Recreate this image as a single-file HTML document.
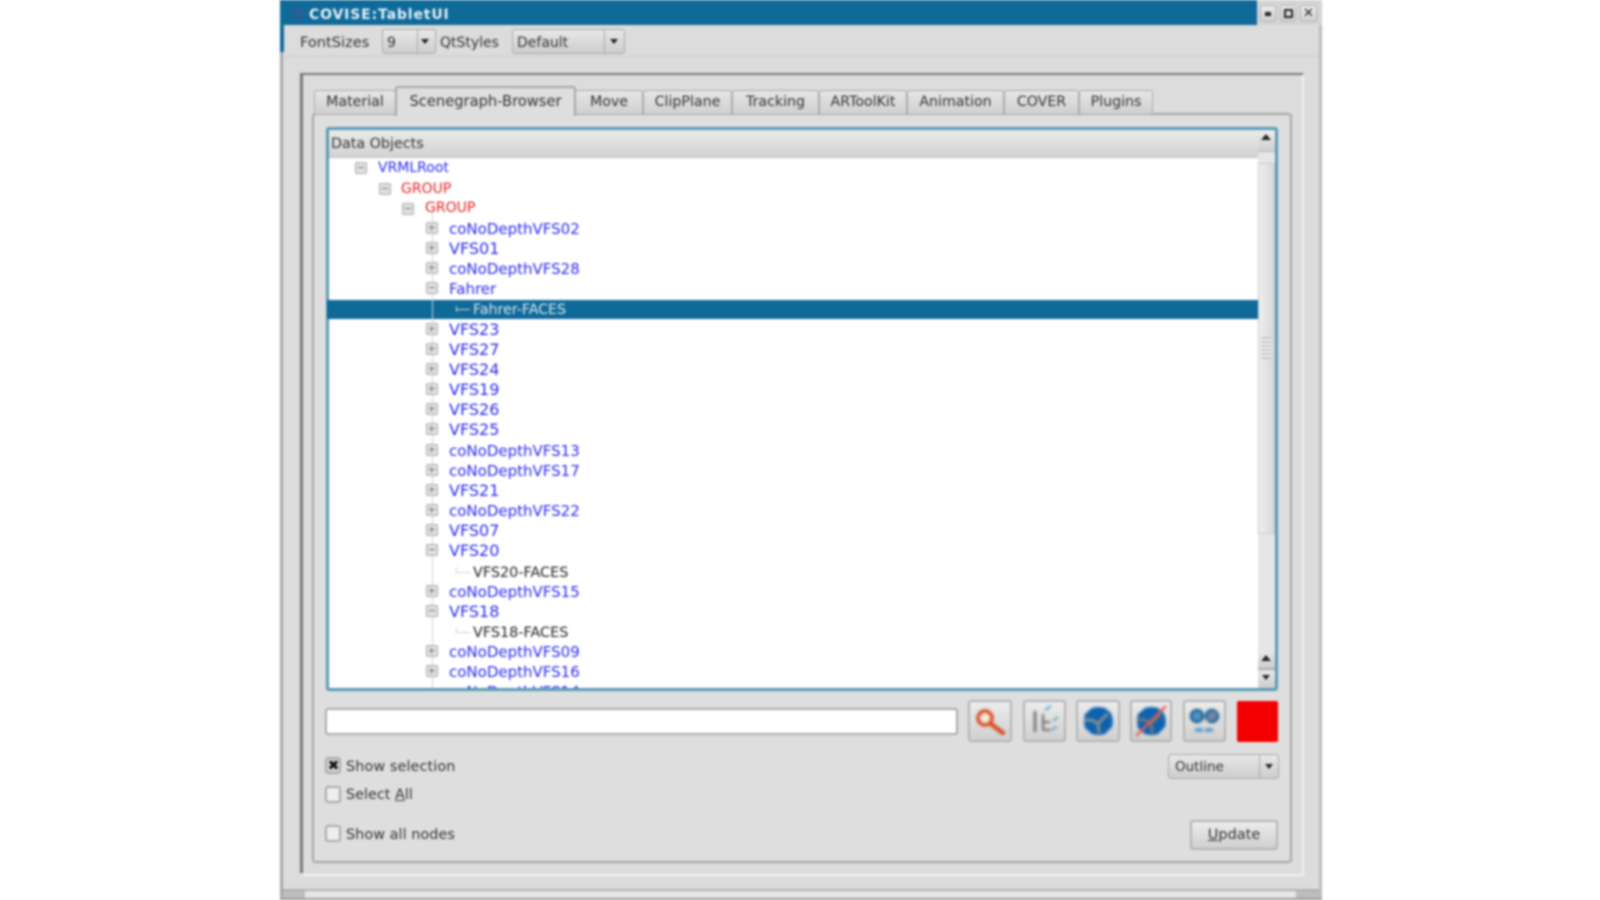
<!DOCTYPE html>
<html><head><meta charset="utf-8"><title>COVISE:TabletUI</title>
<style>
html,body{margin:0;padding:0;background:#fff;width:1600px;height:900px;overflow:hidden}
body{font-family:"DejaVu Sans","Liberation Sans",sans-serif;color:#333}
#w{position:absolute;left:0;top:0;width:1600px;height:900px;filter:blur(1px)}
#w div,#w span.a{position:absolute;box-sizing:border-box}
.t{white-space:nowrap;line-height:20px;height:20px}
.tab{background:linear-gradient(#e6e6e6,#cfcfcf);border:1px solid #aaa;border-bottom:0;border-radius:3px 3px 0 0;font-size:14.2px;text-align:center;line-height:23px;color:#333}
.btn{background:linear-gradient(#ececec,#d0d0d0);border:2px solid #b4b4b4;border-radius:3px}
.combo{background:linear-gradient(#e8e8e8,#cdcdcd);border:1px solid #aaa;border-radius:3px;font-size:14px;line-height:25px;color:#333}
.cb{width:16px;height:17px;background:#eee;border:2px solid #aaa;border-radius:3px}
.arr{width:0;height:0;border-left:4px solid transparent;border-right:4px solid transparent;border-top:5px solid #222}
.aru{width:0;height:0;border-left:5px solid transparent;border-right:5px solid transparent;border-bottom:6px solid #222}
.sep{width:1px;background:#aaa}
.r{font-size:15px;color:#2a2af0;margin-top:-1px}
.v{font-size:16px;color:#2a2af0;margin-top:-1px}
.red{color:#e02020}.blk{color:#222}
.ex{width:12px;height:12px;border:1px solid #aaa;background:#e0e0e0;border-radius:2px;margin-top:-.5px}
.ex:after{content:"";position:absolute;left:2px;top:4px;width:6px;height:1px;background:#777}
.ex.p:before{content:"";position:absolute;left:4px;top:2px;width:1px;height:6px;background:#777}
.ln{background:#d4d4d4}
</style></head><body>
<div id="w">
<!-- window -->
<div style="left:280px;top:0;width:1042px;height:900px;background:#dcdcdc;border-left:3px solid #a8a8a8;border-right:3px solid #bbb"></div>
<!-- titlebar -->
<div style="left:280px;top:0;width:1042px;height:25px;background:#0f6a9a"></div>
<div style="left:1257px;top:0;width:65px;height:25px;background:#d4d4d4"></div>
<div style="left:280px;top:25px;width:4px;height:27px;background:#0f6a9a"></div>
<div style="left:290px;top:5px;width:15px;height:16px;background:#2a5f9a;border-radius:7px;opacity:.7"></div>
<div class="t" style="left:309px;top:5px;font-size:14px;font-weight:bold;color:#e8f2f6;letter-spacing:.85px">COVISE:TabletUI</div>
<div class="btn" style="left:1260px;top:5px;width:16px;height:17px;border-width:1px"></div>
<div style="left:1265px;top:12px;width:6px;height:4px;background:#222"></div>
<div class="btn" style="left:1280px;top:5px;width:16px;height:17px;border-width:1px"></div>
<div style="left:1284px;top:9px;width:9px;height:9px;border:2px solid #222"></div>
<div class="btn" style="left:1300px;top:5px;width:17px;height:17px;border-width:1px"></div>
<div class="t" style="left:1303px;top:4px;font-size:13px;font-weight:bold;color:#222">✕</div>
<!-- toolbar -->
<div class="t" style="left:300px;top:32.5px;font-size:14.6px;color:#333">FontSizes</div>
<div class="combo" style="left:382px;top:29px;width:54px;height:25px;padding-left:4px;line-height:26px">9</div>
<div class="sep" style="left:417px;top:30px;height:23px"></div>
<div class="arr" style="left:421px;top:39px"></div>
<div class="t" style="left:440px;top:32.5px;font-size:14px;color:#333">QtStyles</div>
<div class="combo" style="left:512px;top:29px;width:113px;height:25px;padding-left:4px;line-height:26px">Default</div>
<div class="sep" style="left:604px;top:30px;height:23px"></div>
<div class="arr" style="left:610px;top:39px"></div>
<div style="left:284px;top:56px;width:1035px;height:1px;background:#ccc"></div>
<!-- outer frame -->
<div style="left:300px;top:73px;width:1003px;height:2px;background:#777"></div>
<div style="left:300px;top:73px;width:3px;height:800px;background:#777"></div>
<div style="left:1302px;top:75px;width:2px;height:800px;background:#f2f2f2"></div>
<div style="left:303px;top:874px;width:1001px;height:2px;background:#f2f2f2"></div>
<!-- bottom bar -->
<div style="left:283px;top:889px;width:1036px;height:2px;background:#b0b0b0"></div>
<div style="left:283px;top:891px;width:1036px;height:7px;background:#e6e6e6"></div>
<div style="left:283px;top:891px;width:22px;height:7px;background:#bdbdbd"></div>
<div style="left:1296px;top:891px;width:23px;height:7px;background:#bdbdbd"></div>
<div style="left:280px;top:898px;width:1042px;height:2px;background:#999"></div>
<!-- pane -->
<div style="left:312px;top:113px;width:980px;height:750px;background:#dedede;border:2px solid #a6a6a6;border-radius:3px"></div>
<!-- tabs -->
<div class="tab" style="left:314px;top:90px;width:82px;height:24px">Material</div>
<div class="tab" style="left:575px;top:90px;width:68px;height:24px">Move</div>
<div class="tab" style="left:643px;top:90px;width:89px;height:24px">ClipPlane</div>
<div class="tab" style="left:732px;top:90px;width:87px;height:24px">Tracking</div>
<div class="tab" style="left:819px;top:90px;width:88px;height:24px">ARToolKit</div>
<div class="tab" style="left:907px;top:90px;width:97px;height:24px">Animation</div>
<div class="tab" style="left:1004px;top:90px;width:75px;height:24px">COVER</div>
<div class="tab" style="left:1079px;top:90px;width:74px;height:24px">Plugins</div>
<div class="tab" style="left:395px;top:86px;width:181px;height:30px;background:#dedede;line-height:27px;font-size:14.7px;border:2px solid #a6a6a6;border-bottom:0">Scenegraph-Browser</div>
<!-- tree -->
<div style="left:326px;top:127px;width:952px;height:564px;background:#fff;border:3px solid #5a9ab8;border-radius:3px"></div>
<div style="left:329px;top:130px;width:929px;height:28px;background:linear-gradient(#ebebeb,#d2d2d2);border-bottom:1px solid #c4c4c4"></div>
<div class="t" style="left:331px;top:134px;font-size:14.3px;color:#333">Data Objects</div>
<div style="left:1258px;top:130px;width:17px;height:558px;background:#e6e6e6"></div>
<div style="left:1258px;top:130px;width:17px;height:22px;background:linear-gradient(#eee,#cfcfcf);border-bottom:1px solid #bbb"></div>
<div class="aru" style="left:1261px;top:134px"></div>
<div style="left:1258px;top:163px;width:17px;height:371px;background:linear-gradient(90deg,#eee,#d8d8d8);border:1px solid #ccc"></div>
<div style="left:1261px;top:337px;width:11px;height:22px;background:repeating-linear-gradient(#c8c8c8 0 2px,#eee 2px 4px)"></div>
<div style="left:1258px;top:651px;width:17px;height:19px;background:linear-gradient(#e8e8e8,#cecece);border-bottom:2px solid #aaa"></div>
<div class="aru" style="left:1261px;top:655px"></div>
<div style="left:1258px;top:670px;width:17px;height:18px;background:linear-gradient(#e8e8e8,#cecece)"></div>
<div class="arr" style="left:1262px;top:675px"></div>
<!-- selection -->
<div style="left:327px;top:300px;width:931px;height:19px;background:#0f6a9a"></div>
<div id="rows" style="left:329px;top:159.5px;width:929px;height:528.5px;overflow:hidden">
<div class="ln" style="left:103px;top:50px;width:1px;height:480px"></div>
<div class="ex" style="left:26px;top:2.5px"></div><div class="t r" style="left:49px;top:-1px;font-size:14px">VRMLRoot</div>
<div class="ex" style="left:50px;top:23.5px"></div><div class="t r red" style="left:72px;top:20px;font-size:14px">GROUP</div>
<div class="ex" style="left:73px;top:43.5px"></div><div class="t r red" style="left:96px;top:39.5px;font-size:14px">GROUP</div>
<div class="ex p" style="left:97px;top:63px"></div><div class="t r" style="left:120px;top:60px">coNoDepthVFS02</div>
<div class="ex p" style="left:97px;top:83px"></div><div class="t v" style="left:120px;top:80px">VFS01</div>
<div class="ex p" style="left:97px;top:103px"></div><div class="t r" style="left:120px;top:100px">coNoDepthVFS28</div>
<div class="ex" style="left:97px;top:123px"></div><div class="t r" style="left:120px;top:120px">Fahrer</div>
<div class="ln" style="left:127px;top:146px;width:1px;height:6px"></div><div class="ln" style="left:127px;top:149px;width:14px;height:1px"></div>
<div class="t" style="left:144px;top:140px;font-size:14.2px;color:#d8e8f0">Fahrer-FACES</div>
<div class="ex p" style="left:97px;top:164px"></div><div class="t v" style="left:120px;top:161px">VFS23</div>
<div class="ex p" style="left:97px;top:184px"></div><div class="t v" style="left:120px;top:181px">VFS27</div>
<div class="ex p" style="left:97px;top:204px"></div><div class="t v" style="left:120px;top:201px">VFS24</div>
<div class="ex p" style="left:97px;top:224px"></div><div class="t v" style="left:120px;top:221px">VFS19</div>
<div class="ex p" style="left:97px;top:244px"></div><div class="t v" style="left:120px;top:241px">VFS26</div>
<div class="ex p" style="left:97px;top:264px"></div><div class="t v" style="left:120px;top:261px">VFS25</div>
<div class="ex p" style="left:97px;top:285px"></div><div class="t r" style="left:120px;top:282px">coNoDepthVFS13</div>
<div class="ex p" style="left:97px;top:305px"></div><div class="t r" style="left:120px;top:302px">coNoDepthVFS17</div>
<div class="ex p" style="left:97px;top:325px"></div><div class="t v" style="left:120px;top:322px">VFS21</div>
<div class="ex p" style="left:97px;top:345px"></div><div class="t r" style="left:120px;top:342px">coNoDepthVFS22</div>
<div class="ex p" style="left:97px;top:365px"></div><div class="t v" style="left:120px;top:362px">VFS07</div>
<div class="ex" style="left:97px;top:385px"></div><div class="t v" style="left:120px;top:382px">VFS20</div>
<div class="ln" style="left:127px;top:407px;width:1px;height:7px"></div><div class="ln" style="left:127px;top:412px;width:14px;height:1px"></div>
<div class="t blk" style="left:144px;top:403px;font-size:14.4px">VFS20-FACES</div>
<div class="ex p" style="left:97px;top:426px"></div><div class="t r" style="left:120px;top:423px">coNoDepthVFS15</div>
<div class="ex" style="left:97px;top:446px"></div><div class="t v" style="left:120px;top:443px">VFS18</div>
<div class="ln" style="left:127px;top:467px;width:1px;height:7px"></div><div class="ln" style="left:127px;top:472px;width:14px;height:1px"></div>
<div class="t blk" style="left:144px;top:463px;font-size:14.4px">VFS18-FACES</div>
<div class="ex p" style="left:97px;top:486px"></div><div class="t r" style="left:120px;top:483px">coNoDepthVFS09</div>
<div class="ex p" style="left:97px;top:506px"></div><div class="t r" style="left:120px;top:503px">coNoDepthVFS16</div>
<div class="t r" style="left:120px;top:523px">coNoDepthVFS14</div>
</div>
<!-- line edit -->
<div style="left:325px;top:708px;width:633px;height:27px;background:#fff;border:2px solid #aaa;border-radius:3px"></div>
<!-- icon buttons -->
<div class="btn" style="left:968px;top:700px;width:44px;height:42px"></div>
<svg style="position:absolute;left:968px;top:700px;filter:blur(1px)" width="44" height="42" viewBox="0 0 44 42"><circle cx="17" cy="18" r="7" fill="#f4ead8" stroke="#d84a20" stroke-width="3.5"/><path d="M23 24L35 33" stroke="#d84a20" stroke-width="4.5" stroke-linecap="round"/></svg>
<div class="btn" style="left:1023px;top:700px;width:43px;height:42px"></div>
<svg style="position:absolute;left:1023px;top:700px;filter:blur(1px)" width="43" height="42" viewBox="0 0 43 42"><path d="M12 11V32" stroke="#777" stroke-width="3"/><path d="M20 14V30M20 22H27M20 30H27" stroke="#666" stroke-width="2" fill="none"/><path d="M22 10l6-4M30 21l5-4M28 30l6-3" stroke="#5aa5d0" stroke-width="2"/></svg>
<div class="btn" style="left:1076px;top:700px;width:44px;height:42px"></div>
<svg style="position:absolute;left:1076px;top:700px;filter:blur(1px)" width="44" height="42" viewBox="0 0 44 42"><path d="M16 8Q22 6 29 8L35 13Q38 20 36 27L29 34Q22 36 16 34L9 28Q7 20 9 14Z" fill="#0d62b0"/><path d="M8 20C14 19 19 21 22 24C25 20 29 16 32 14M22 24L23 33" stroke="#8a8f90" stroke-width="3" fill="none"/></svg>
<div class="btn" style="left:1130px;top:700px;width:42px;height:42px"></div>
<svg style="position:absolute;left:1130px;top:700px;filter:blur(1px)" width="42" height="42" viewBox="0 0 42 42"><path d="M15 8Q21 6 28 8L34 13Q37 20 35 27L28 34Q21 36 15 34L8 28Q6 20 8 14Z" fill="#0d62b0"/><path d="M7 20C13 19 18 21 21 24C24 20 28 16 31 14M21 24L22 33" stroke="#777" stroke-width="3" fill="none"/><path d="M6 36L36 6" stroke="#e85a50" stroke-width="2.5"/></svg>
<div class="btn" style="left:1183px;top:700px;width:43px;height:42px"></div>
<svg style="position:absolute;left:1183px;top:700px;filter:blur(1px)" width="43" height="42" viewBox="0 0 43 42"><circle cx="14" cy="16" r="6" fill="#4d92c0" stroke="#1d5f94" stroke-width="2.5"/><circle cx="29" cy="16" r="6" fill="#4d92c0" stroke="#1d5f94" stroke-width="2.5"/><path d="M12 30H31" stroke="#5b9ecb" stroke-width="4" stroke-dasharray="8 2"/><path d="M24 21L34 11" stroke="#d96a5a" stroke-width="1.5"/></svg>
<div style="left:1237px;top:701px;width:41px;height:41px;background:#f50000;border-radius:2px"></div>
<!-- checkboxes -->
<div class="cb" style="left:325px;top:757px;background:#d4d4d4"></div>
<div class="t" style="left:327px;top:756px;font-size:14px;font-weight:bold;color:#111;width:13px;text-align:center">✖</div>
<div class="t" style="left:346px;top:757px;font-size:14.4px;letter-spacing:.1px;color:#333">Show selection</div>
<div class="cb" style="left:325px;top:786px"></div>
<div class="t" style="left:346px;top:785px;font-size:14.4px;color:#333">Select <u>A</u>ll</div>
<div class="cb" style="left:325px;top:825px"></div>
<div class="t" style="left:346px;top:824.5px;font-size:14.4px;letter-spacing:.05px;color:#333">Show all nodes</div>
<!-- combo + button -->
<div class="combo" style="left:1168px;top:754px;width:111px;height:25px;padding-left:6px;font-size:13.5px">Outline</div>
<div class="sep" style="left:1259px;top:755px;height:23px"></div>
<div class="arr" style="left:1265px;top:764px"></div>
<div class="btn" style="left:1190px;top:820px;width:88px;height:30px;font-size:14.5px;text-align:center;line-height:26px;color:#333"><u>U</u>pdate</div>
</div>
</body></html>
